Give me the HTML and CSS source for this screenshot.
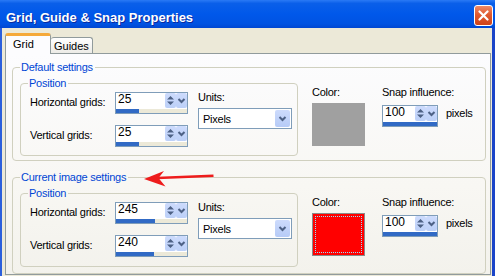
FILE: index.html
```html
<!DOCTYPE html>
<html lang="en">
<head>
  <meta charset="UTF-8" />
  <title>Grid, Guide &amp; Snap Properties</title>
  <link rel="stylesheet" href="styles.css">
</head>
<body>
  <div class="window">
    <div class="titlebar">
      <span class="title">Grid, Guide &amp; Snap Properties</span>
      <button class="close">
        <svg width="11" height="11" viewBox="0 0 11 11"><path d="M1.5 1.5 L9.5 9.5 M9.5 1.5 L1.5 9.5" stroke="#fff" stroke-width="2.2" stroke-linecap="round"/></svg>
      </button>
    </div>

    <div class="frame">
      <div class="tabs">
        <div class="tab active">Grid</div>
        <div class="tab">Guides</div>
      </div>

      <div class="panel">
        <fieldset class="group">
          <legend>Default settings</legend>
          <div class="group-body">
            <fieldset class="position">
              <legend>Position</legend>
              <div class="position-body">
                <div class="grid-fields">
                  <span class="field-label">Horizontal grids:</span>
                  <div class="spin">
                    <div class="spin-field">
                      <span class="spin-value">25</span>
                      <span class="spin-btn"><svg width="11" height="15" viewBox="0 0 11 15"><path d="M2 6.5 L5.5 3 L9 6.5 Z M2 8.5 L9 8.5 L5.5 12 Z" fill="#4d6185"/></svg></span>
                      <span class="spin-btn"><svg width="11" height="15" viewBox="0 0 11 15"><path d="M2.5 6 L5.5 9 L8.5 6" fill="none" stroke="#4d6185" stroke-width="2"/></svg></span>
                    </div>
                    <div class="slider"><div class="slider-fill" style="width: 32%"></div></div>
                  </div>
                  <span class="field-label">Vertical grids:</span>
                  <div class="spin">
                    <div class="spin-field">
                      <span class="spin-value">25</span>
                      <span class="spin-btn"><svg width="11" height="15" viewBox="0 0 11 15"><path d="M2 6.5 L5.5 3 L9 6.5 Z M2 8.5 L9 8.5 L5.5 12 Z" fill="#4d6185"/></svg></span>
                      <span class="spin-btn"><svg width="11" height="15" viewBox="0 0 11 15"><path d="M2.5 6 L5.5 9 L8.5 6" fill="none" stroke="#4d6185" stroke-width="2"/></svg></span>
                    </div>
                    <div class="slider"><div class="slider-fill" style="width: 32%"></div></div>
                  </div>
                </div>
                <div class="units">
                  <div class="small-label">Units:</div>
                  <div class="select">
                    <span class="select-value">Pixels</span>
                    <span class="drop-btn"><svg width="15" height="17" viewBox="0 0 15 17"><path d="M4.5 7 L7.5 10 L10.5 7" fill="none" stroke="#4d6185" stroke-width="2"/></svg></span>
                  </div>
                </div>
              </div>
            </fieldset>

            <div class="color-col">
              <div class="small-label">Color:</div>
              <div class="swatch swatch-gray"></div>
            </div>

            <div class="snap-col">
              <div class="small-label">Snap influence:</div>
              <div class="snap-row">
                <div class="spin spin-small">
                  <div class="spin-field">
                    <span class="spin-value">100</span>
                    <span class="spin-btn"><svg width="11" height="15" viewBox="0 0 11 15"><path d="M2 6.5 L5.5 3 L9 6.5 Z M2 8.5 L9 8.5 L5.5 12 Z" fill="#4d6185"/></svg></span>
                    <span class="spin-btn"><svg width="11" height="15" viewBox="0 0 11 15"><path d="M2.5 6 L5.5 9 L8.5 6" fill="none" stroke="#4d6185" stroke-width="2"/></svg></span>
                  </div>
                  <div class="slider"><div class="slider-fill" style="width: 100%"></div></div>
                </div>
                <span class="unit-text">pixels</span>
              </div>
            </div>
          </div>
        </fieldset>

        <fieldset class="group group-current">
          <legend>Current image settings</legend>
          <div class="group-body">
            <fieldset class="position">
              <legend>Position</legend>
              <div class="position-body">
                <div class="grid-fields">
                  <span class="field-label">Horizontal grids:</span>
                  <div class="spin">
                    <div class="spin-field">
                      <span class="spin-value">245</span>
                      <span class="spin-btn"><svg width="11" height="15" viewBox="0 0 11 15"><path d="M2 6.5 L5.5 3 L9 6.5 Z M2 8.5 L9 8.5 L5.5 12 Z" fill="#4d6185"/></svg></span>
                      <span class="spin-btn"><svg width="11" height="15" viewBox="0 0 11 15"><path d="M2.5 6 L5.5 9 L8.5 6" fill="none" stroke="#4d6185" stroke-width="2"/></svg></span>
                    </div>
                    <div class="slider"><div class="slider-fill" style="width: 55%"></div></div>
                  </div>
                  <span class="field-label">Vertical grids:</span>
                  <div class="spin">
                    <div class="spin-field">
                      <span class="spin-value">240</span>
                      <span class="spin-btn"><svg width="11" height="15" viewBox="0 0 11 15"><path d="M2 6.5 L5.5 3 L9 6.5 Z M2 8.5 L9 8.5 L5.5 12 Z" fill="#4d6185"/></svg></span>
                      <span class="spin-btn"><svg width="11" height="15" viewBox="0 0 11 15"><path d="M2.5 6 L5.5 9 L8.5 6" fill="none" stroke="#4d6185" stroke-width="2"/></svg></span>
                    </div>
                    <div class="slider"><div class="slider-fill" style="width: 53%"></div></div>
                  </div>
                </div>
                <div class="units">
                  <div class="small-label">Units:</div>
                  <div class="select">
                    <span class="select-value">Pixels</span>
                    <span class="drop-btn"><svg width="15" height="17" viewBox="0 0 15 17"><path d="M4.5 7 L7.5 10 L10.5 7" fill="none" stroke="#4d6185" stroke-width="2"/></svg></span>
                  </div>
                </div>
              </div>
            </fieldset>

            <div class="color-col">
              <div class="small-label">Color:</div>
              <div class="swatch swatch-red"></div>
            </div>

            <div class="snap-col">
              <div class="small-label">Snap influence:</div>
              <div class="snap-row">
                <div class="spin spin-small">
                  <div class="spin-field">
                    <span class="spin-value">100</span>
                    <span class="spin-btn"><svg width="11" height="15" viewBox="0 0 11 15"><path d="M2 6.5 L5.5 3 L9 6.5 Z M2 8.5 L9 8.5 L5.5 12 Z" fill="#4d6185"/></svg></span>
                    <span class="spin-btn"><svg width="11" height="15" viewBox="0 0 11 15"><path d="M2.5 6 L5.5 9 L8.5 6" fill="none" stroke="#4d6185" stroke-width="2"/></svg></span>
                  </div>
                  <div class="slider"><div class="slider-fill" style="width: 100%"></div></div>
                </div>
                <span class="unit-text">pixels</span>
              </div>
            </div>
          </div>
        </fieldset>
      </div>
    </div>

    <!-- annotation arrow drawn over the dialog -->
    <svg class="arrow" width="80" height="26" viewBox="0 0 80 26">
      <path d="M17 12 L73.5 9.8" stroke="#ee1c1c" stroke-width="2.5" fill="none"/>
      <path d="M4 13 L24 5 L18.5 12 L25.5 20.5 Z" fill="#ee1c1c"/>
    </svg>
  </div>
</body>
</html>
```

FILE: styles.css
```css
* {
  box-sizing: border-box;
}

body {
  margin: 0;
  font-family: 'Liberation Sans', Arial, sans-serif;
  font-size: 11px;
  letter-spacing: -0.25px;
  color: #000;
}

.window {
  position: relative;
  width: 495px;
  height: 276px;
  display: flex;
  flex-direction: column;
  overflow: hidden;
  background: #ece9d8;
}

.titlebar {
  flex: none;
  height: 28px;
  display: flex;
  justify-content: space-between;
  align-items: flex-start;
  padding: 0 2px 0 6px;
  background: linear-gradient(180deg, #2a7af5 0%, #0a5fe9 12%, #0058ea 50%, #0053e2 85%, #0047d2 100%);
}

.title {
  margin-top: 7px;
  line-height: 21px;
  font-size: 13px;
  font-weight: bold;
  letter-spacing: 0;
  color: #fff;
  text-shadow: 1px 1px #0b2a9e;
}

.close {
  margin-top: 5px;
  width: 19px;
  height: 21px;
  padding: 0;
  display: flex;
  align-items: center;
  justify-content: center;
  border: 1px solid #fff;
  border-radius: 3px;
  background: linear-gradient(180deg, #ee8a68 0%, #e05a30 45%, #cf4319 100%);
}

.frame {
  flex: 1;
  display: flex;
  flex-direction: column;
  padding: 5px 1px 1px 3px;
  border-left: 2px solid #2b5fdc;
  border-right: 3px solid #1a44c8;
}

.tabs {
  display: flex;
  align-items: flex-end;
  height: 21px;
  margin-bottom: -1px;
}

.tab {
  width: 42px;
  height: 16px;
  margin-bottom: 1px;
  padding: 1px 0 0 3px;
  line-height: 14px;
  letter-spacing: 0;
  border: 1px solid #919b9c;
  border-bottom: none;
  border-radius: 3px 3px 0 0;
  background: linear-gradient(180deg, #ffffff, #ecebe6);
}

.tab.active {
  position: relative;
  z-index: 1;
  width: 46px;
  height: 21px;
  margin-bottom: 0;
  padding-left: 7px;
  border-top: 3px solid #f5a93a;
  background: #fcfcfe;
}

.tab + .tab {
  border-left: none;
}

.panel {
  flex: 1;
  padding: 7px 4px 0 6px;
  border: 1px solid #919b9c;
  background: linear-gradient(180deg, #fcfcfe 0%, #f8f7f3 60%, #f3f2ec 100%);
}

fieldset {
  margin: 0;
  min-width: 0;
  border: 1px solid #d0d0bf;
  border-radius: 4px;
}

legend {
  padding: 0 2px 0 1px;
  line-height: 13px;
  color: #0046d5;
}

.group {
  padding: 3px 0 4px 7px;
}

.group-current {
  margin-top: 10px;
  padding-bottom: 6px;
}

.group-body {
  display: flex;
  align-items: flex-start;
}

.position {
  width: 278px;
  padding: 2px 5px 8px 7px;
}

.group-current .position {
  padding-bottom: 9px;
}

.position-body {
  display: flex;
  align-items: flex-start;
}

.grid-fields {
  display: grid;
  grid-template-columns: 85px 73px;
  row-gap: 11px;
  margin-left: 2px;
}

.field-label {
  line-height: 20px;
}

.spin {
  width: 73px;
  height: 22px;
  display: flex;
  flex-direction: column;
  border: 1px solid #7f9db9;
  background: #fff;
}

.spin-small {
  width: 56px;
}

.spin-field {
  flex: 1;
  display: flex;
  align-items: flex-start;
}

.spin-value {
  flex: 1;
  padding-left: 2px;
  font-size: 12px;
  line-height: 13px;
  letter-spacing: 0;
}

.spin-btn {
  width: 11px;
  height: 15px;
  display: flex;
  border-radius: 2px;
  background: linear-gradient(180deg, #cddbfc 0%, #bcd0f8 100%);
}

.slider {
  height: 4px;
  background: #ece9d8;
}

.slider-fill {
  height: 100%;
  background: #316ac5;
}

.units {
  margin-left: 10px;
  margin-top: -1px;
}

.small-label {
  line-height: 13px;
}

.select {
  width: 94px;
  height: 21px;
  margin-top: 4px;
  display: flex;
  align-items: center;
  padding-left: 4px;
  border: 1px solid #7f9db9;
  background: #fff;
}

.select-value {
  flex: 1;
  padding-top: 2px;
  line-height: 19px;
}

.drop-btn {
  width: 15px;
  height: 17px;
  margin-right: 1px;
  display: flex;
  border-radius: 2px;
  background: linear-gradient(180deg, #cddbfc 0%, #b6cbf7 100%);
}

.color-col {
  width: 70px;
  margin-left: 14px;
  margin-top: 9px;
}

.swatch {
  width: 53px;
  height: 43px;
  margin-top: 4px;
}

.swatch-gray {
  background: #a0a0a0;
}

.swatch-red {
  background: #ff0000;
  border: 1px solid #8a8a8a;
  outline: 1px dotted #8fe0ff;
  outline-offset: -4px;
}

.snap-col {
  margin-top: 9px;
}

.snap-row {
  display: flex;
  align-items: flex-start;
  margin-top: 6px;
}

.unit-text {
  margin-left: 8px;
  margin-top: 2px;
  line-height: 13px;
}

.arrow {
  position: absolute;
  left: 140px;
  top: 166px;
}
```
